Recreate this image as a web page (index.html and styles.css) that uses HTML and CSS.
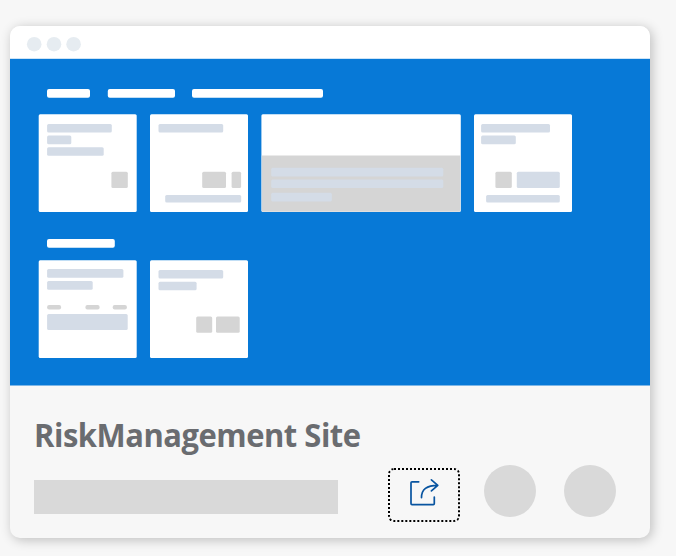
FILE: index.html
```html
<!DOCTYPE html>
<html lang="en">
<head>
<meta charset="utf-8">
<title>RiskManagement Site</title>
<link rel="stylesheet" href="styles.css">
</head>
<body>
<article class="card">
  <svg class="preview" viewBox="10 26 640 360" aria-hidden="true">
    <rect class="white" x="10" y="26" width="640" height="33"/>
    <g class="dot"><circle cx="34.2" cy="44.2" r="7.3"/><circle cx="54" cy="44.2" r="7.3"/><circle cx="73.6" cy="44.2" r="7.3"/></g>
    <rect class="blue" x="10" y="58.8" width="640" height="326.7"/>
    <g class="white">
      <rect x="47" y="89" width="43" height="8.8" rx="2"/>
      <rect x="107.8" y="89" width="67.2" height="8.8" rx="2"/>
      <rect x="192" y="89" width="131" height="8.8" rx="2"/>
      <rect x="47" y="239" width="67.8" height="8.8" rx="2"/>
      <rect x="38.7" y="114.3" width="98" height="97.8" rx="1.5"/>
      <rect x="150" y="114.3" width="98" height="97.8" rx="1.5"/>
      <rect x="261.4" y="114.3" width="199.4" height="97.8" rx="1.5"/>
      <rect x="474" y="114.3" width="98" height="97.8" rx="1.5"/>
      <rect x="38.7" y="260.3" width="98" height="97.8" rx="1.5"/>
      <rect x="150" y="260.3" width="98" height="97.8" rx="1.5"/>
    </g>
    <g class="grey">
      <path d="M261.8 155.5h198.6v55.2q0 1-1 1h-196.6q-1 0-1-1z"/>
      <rect x="111.4" y="171.8" width="16.4" height="16.3" rx="1.5"/>
      <rect x="202.2" y="171.8" width="23.8" height="16.3" rx="1.5"/>
      <rect x="231.6" y="171.8" width="9.5" height="16.3" rx="1.5"/>
      <rect x="495.4" y="171.8" width="16.4" height="16.3" rx="1.5"/>
      <rect x="47.1" y="305" width="14" height="4.4" rx="2"/>
      <rect x="85.4" y="305" width="14.2" height="4.4" rx="2"/>
      <rect x="112.7" y="305" width="14.2" height="4.4" rx="2"/>
      <rect x="196.2" y="316.6" width="16" height="16.1" rx="1.5"/>
      <rect x="216" y="316.6" width="23.7" height="16.1" rx="1.5"/>
    </g>
    <g class="pale">
      <rect x="47.1" y="124" width="64.7" height="8.6" rx="1.5"/>
      <rect x="47.1" y="135.5" width="24.2" height="8.7" rx="1.5"/>
      <rect x="47.1" y="147.2" width="56.6" height="8.6" rx="1.5"/>
      <rect x="158.5" y="124" width="64.7" height="8.6" rx="1.5"/>
      <rect x="165.2" y="195.1" width="76" height="7.5" rx="1.5"/>
      <rect x="271.2" y="167.8" width="172.1" height="8.6" rx="1.5"/>
      <rect x="271.2" y="179.5" width="172.1" height="8.6" rx="1.5"/>
      <rect x="271.2" y="192.8" width="60.6" height="8.6" rx="1.5"/>
      <rect x="481.1" y="124" width="68.9" height="8.6" rx="1.5"/>
      <rect x="481.1" y="135.5" width="34.7" height="8.7" rx="1.5"/>
      <rect x="516.8" y="171.8" width="43" height="16.3" rx="1.5"/>
      <rect x="486.1" y="195.1" width="73.7" height="7.5" rx="1.5"/>
      <rect x="47.1" y="269.1" width="76.3" height="8.7" rx="1.5"/>
      <rect x="47.1" y="281" width="45.6" height="8.7" rx="1.5"/>
      <rect x="47.1" y="313.9" width="80.6" height="16" rx="1.5"/>
      <rect x="158.5" y="270" width="64.7" height="8.6" rx="1.5"/>
      <rect x="158.5" y="281.7" width="38.1" height="8.6" rx="1.5"/>
    </g>
  </svg>
  <div class="details">
    <h1 class="title">RiskManagement Site</h1>
    <div class="footer">
      <div class="placeholder"></div>
      <button class="share" type="button" aria-label="Share">
        <svg class="share-icon" viewBox="0 0 32 32">
          <path d="M10.7 4.8H4Q3 4.8 3 5.8V26.6Q3 27.6 4 27.6H25.3Q26.3 27.6 26.3 26.6V20"/>
          <path d="M13.5 20.6Q13.4 8.3 29.6 8.3M23.4 2.9L29.8 8.3L23.4 13.9"/>
        </svg>
      </button>
      <span class="action"></span>
      <span class="action"></span>
    </div>
  </div>
</article>
</body>
</html>
```
FILE: styles.css
```css
* { box-sizing: border-box; }

body {
  margin: 0;
  padding: 26px 26px 18px 10px;
  background: #f7f7f7;
  font-family: "Open Sans", "Noto Sans", sans-serif;
}

.card {
  width: 640px;
  height: 512px;
  border-radius: 10px;
  overflow: hidden;
  background: #f7f7f7;
  box-shadow: 2px 2px 12px rgba(0, 0, 0, 0.24);
}

.preview { display: block; width: 640px; height: 360px; }
.white { fill: #fff; }
.blue { fill: #0779d7; }
.grey { fill: #d5d5d5; }
.pale { fill: #d4dce7; }
.dot { fill: #e6ecf1; }

.details { padding: 27px 34px 0 24px; }

.title {
  margin: 0;
  height: 44px;
  line-height: 44px;
  font-size: 32px;
  font-weight: 700;
  letter-spacing: -0.5px;
  white-space: nowrap;
  color: #6a6c70;
  transform: scaleX(0.967);
  transform-origin: left;
}

.footer { display: flex; align-items: flex-start; margin-top: 8px; }

.placeholder {
  width: 304px;
  height: 34px;
  margin: 15px 50px 0 0;
  background: #d9d9d9;
}

.share {
  display: flex;
  align-items: center;
  justify-content: center;
  width: 72px;
  height: 54px;
  margin: 3px 24px 0 0;
  padding: 0;
  border: 2px dotted #000;
  border-radius: 6px;
  background: transparent;
}

.share-icon {
  width: 32px;
  height: 32px;
  margin-top: -4px;
  fill: none;
  stroke: #0854a0;
  stroke-width: 1.7;
  stroke-linecap: round;
  stroke-linejoin: round;
}

.action {
  width: 52px;
  height: 52px;
  border-radius: 50%;
  background: #d9d9d9;
}

.action + .action { margin-left: 28px; }
```
